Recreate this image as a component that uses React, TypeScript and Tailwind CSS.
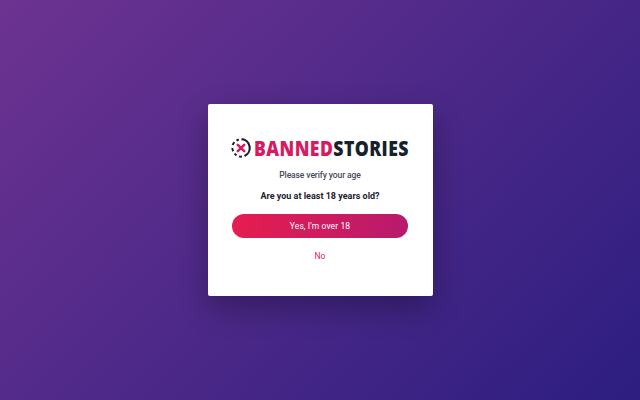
export default function App() {
  return (
    <div className="w-[640px] h-[400px] flex items-center justify-center overflow-hidden bg-[linear-gradient(135deg,#6d3391_0%,#2c1e80_100%)] font-['Roboto',sans-serif]">
      <div className="w-[225px] h-[192px] bg-white rounded-[2px] shadow-[0_12px_30px_rgba(0,0,0,0.3)] flex flex-col items-center pt-[33px] px-[24px]">
        <div className="flex items-center h-[22px] w-[177px] gap-[3px] -ml-[1px]">
          <svg width="20" height="20" viewBox="0 0 20 20" className="shrink-0">
            <path d="M10.5 1.2A8.8 8.8 0 0 1 13.5 18" fill="none" stroke="#17212b" strokeWidth="2.2" />
            <path d="M11 18.6A8.8 8.8 0 0 1 8 18.4M5.5 17.4A8.8 8.8 0 0 1 3.6 15.7M2.2 13.2A8.8 8.8 0 0 1 1.3 10M1.7 7A8.8 8.8 0 0 1 3.4 4.2M5.5 2.6A8.8 8.8 0 0 1 7.8 1.5" fill="none" stroke="#17212b" strokeWidth="2" />
            <path d="M6.8 6.8l6.4 6.4M13.2 6.8l-6.4 6.4" stroke="#d81b60" strokeWidth="2.6" strokeLinecap="round" />
          </svg>
          <div className="font-['Open_Sans',sans-serif] font-extrabold text-[20.5px] leading-[22px] whitespace-nowrap origin-left scale-x-[0.86] tracking-[0.5px]">
            <span className="text-[#d81b60]">BANNED</span>
            <span className="text-[#17212b]">STORIES</span>
          </div>
        </div>
        <div className="mt-[9px] text-[8.5px] leading-[14px] font-medium text-[#444a5a] tracking-[-0.1px]">Please verify your age</div>
        <div className="mt-[7px] text-[9px] leading-[14px] font-bold text-[#1c2230]">Are you at least 18 years old?</div>
        <button className="mt-[11px] w-[176px] h-[24px] shrink-0 rounded-full bg-[linear-gradient(90deg,#e61d4f_0%,#b81a6e_100%)] text-white text-[8.5px] font-normal tracking-[0.1px]">Yes, I'm over 18</button>
        <div className="mt-[11px] text-[8.5px] leading-[14px] text-[#d81b60]">No</div>
      </div>
    </div>
  );
}
